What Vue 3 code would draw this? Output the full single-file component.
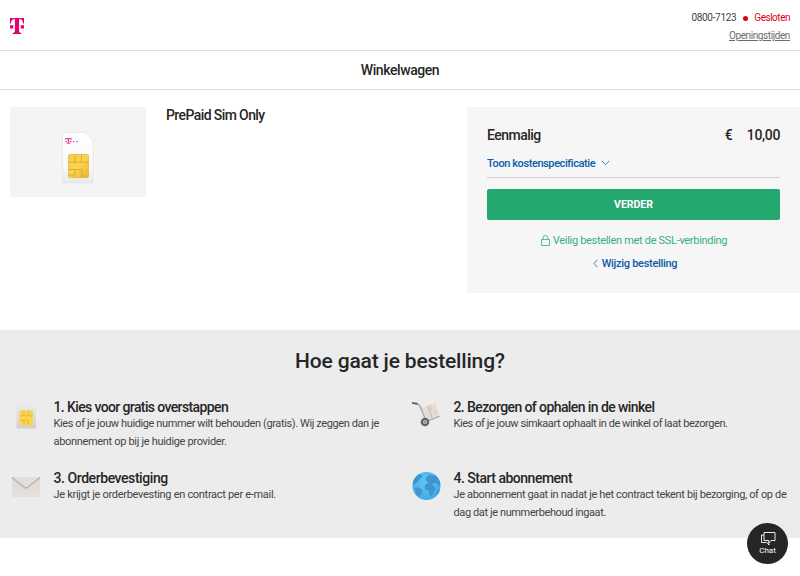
<script setup>
const steps = [
  { icon: 'sim', title: '1. Kies voor gratis overstappen', lines: ['Kies of je jouw huidige nummer wilt behouden (gratis). Wij zeggen dan je', 'abonnement op bij je huidige provider.'] },
  { icon: 'cart', title: '2. Bezorgen of ophalen in de winkel', lines: ['Kies of je jouw simkaart ophaalt in de winkel of laat bezorgen.'] },
  { icon: 'mail', title: '3. Orderbevestiging', lines: ['Je krijgt je orderbevesting en contract per e-mail.'] },
  { icon: 'globe', title: '4. Start abonnement', lines: ['Je abonnement gaat in nadat je het contract tekent bij bezorging, of op de', 'dag dat je nummerbehoud ingaat.'] },
]
</script>

<template>
  <div class="page">
    <header class="top">
      <svg class="logo" width="14" height="16" viewBox="0 0 14 16" fill="#e20074">
        <path d="M0 0h14v5.6h-.9C12.800 2.400 11.700 1 9.100 1v11.200c0 2 .5 2.600 2.200 2.700V16H2.700v-1.100c1.700-.1 2.200-.7 2.200-2.700V1C2.300 1 1.200 2.400.9 5.600H0zM0 7.300h3.300v3.200H0zM10.700 7.300H14v3.200h-3.300z" />
      </svg>
      <div class="contact">
        <div class="phone"><span class="number">0800-7123</span><i class="dot"></i><span class="closed">Gesloten</span></div>
        <a class="hours">Openingstijden</a>
      </div>
    </header>
    <h1 class="bar">Winkelwagen</h1>

    <main class="order">
      <div class="thumb">
        <svg width="34" height="54" viewBox="0 0 34 54">
          <defs>
            <linearGradient id="card" x1="0" y1="0" x2="0" y2="1"><stop offset="0" stop-color="#fff" /><stop offset=".7" stop-color="#f8f8f8" /><stop offset="1" stop-color="#e9e9e9" /></linearGradient>
            <linearGradient id="gold" x1="0" y1="0" x2="1" y2="1"><stop offset="0" stop-color="#fbcb48" /><stop offset=".5" stop-color="#f9d44f" /><stop offset="1" stop-color="#e9b52f" /></linearGradient>
          </defs>
          <path d="M2.500 1.500H24.500L32 9V52H1.500V2.500Z" fill="url(#card)" stroke="#e4e4e4" stroke-width=".7" />
          <path fill="#e83a94" d="M4.500 7h6v2.200h-.6L9.300 8H8.200v4h1v.8H5.800V12h1V8H5.700l-.6 1.200h-.6zM4.500 10h1.400v1.200H4.500zM9.100 10h1.400v1.200H9.100zM12 10h1.300v1.300H12zM15.300 10h1.300v1.300h-1.300z" />
          <rect x="7.500" y="23.500" width="20" height="23" rx="1.500" fill="url(#gold)" stroke="#d9a52d" stroke-width=".6" />
          <path d="M7.500 31.200h20M14 23.500v7.700M20.500 23.500v7.700M7.500 38.500H21V46.500M14 38.500V44M7.500 44H14" fill="none" stroke="#d6a22c" stroke-width=".8" />
        </svg>
      </div>
      <h2 class="product">PrePaid Sim Only</h2>
      <aside class="summary">
        <div class="total"><span class="once">Eenmalig</span><span class="price"><span>€</span><span class="amount">10,00</span></span></div>
        <a class="spec"><span>Toon kostenspecificatie</span>
          <svg width="9" height="6" viewBox="0 0 9 6" fill="none" stroke="#3b82c0"><path d="M.8.900 4.500 4.800 8.200.9" /></svg>
        </a>
        <button class="next">VERDER</button>
        <div class="secure">
          <svg width="9" height="11" viewBox="0 0 9 11" fill="none" stroke="#3fb27f" stroke-width=".85"><path d="M.5 4.500h8v6h-8zM2 4.500V3a2.500 2.500 0 0 1 5 0v1.500" /></svg>
          <span>Veilig bestellen met de SSL-verbinding</span>
        </div>
        <a class="change">
          <svg width="5" height="9" viewBox="0 0 5 9" fill="none" stroke="#3b82c0"><path d="M4.400.8 1 4.500l3.400 3.700" /></svg>
          <span>Wijzig bestelling</span>
        </a>
      </aside>
    </main>

    <section class="how">
      <h2 class="howtitle">Hoe gaat je bestelling?</h2>
      <div class="steps">
        <article v-for="s in steps" :key="s.icon" class="step" :class="s.icon">
          <div class="pic">
            <svg v-if="s.icon === 'sim'" width="30" height="30" viewBox="0 0 30 30">
              <defs><linearGradient id="sc" x1="0" y1="0" x2="0" y2="1"><stop offset="0" stop-color="#ededed" /><stop offset=".5" stop-color="#e0e0e0" /><stop offset="1" stop-color="#cfcfcf" /></linearGradient></defs>
              <path d="M5.500 2H21l4 4V28.500H5.500z" fill="url(#sc)" />
              <rect x="8.500" y="10.500" width="13.500" height="15" rx="1" fill="#fbd54b" />
              <path d="M8.500 15.800H22M12.900 10.500v5.300M17.700 10.500v5.300M8.500 20.200h8.800v4.300M13 20.200v4.300" fill="none" stroke="#e4b238" stroke-width=".8" />
            </svg>
            <svg v-else-if="s.icon === 'cart'" width="30" height="30" viewBox="0 0 30 30">
              <path d="M10.500 8 24.500 2.800 28.500 14.500 16 20z" fill="#e6dcd8" />
              <path d="m16 6.200 1.600-.6 4.300 11.800-1.600.7z" fill="#cdc2be" />
              <path d="m17.600 5.600 1.900-.7 2 5.300-1.900.7z" fill="#d8cdc9" />
              <path d="m23.300 11.700 1.600-.6.700 1.800-1.600.6z" fill="#c9bfbc" />
              <path d="M5.500 3.500c2.700.5 3.400 2.100 4.300 4.400l4.900 12.200M15 21.600l13.500-5.400" fill="none" stroke="#aaa8aa" stroke-width="1.400" />
              <path d="m1.800 2.900 4 .9" stroke="#69676a" stroke-width="2" stroke-linecap="round" />
              <circle cx="14" cy="22" r="3.200" fill="#c2c0c1" stroke="#656366" stroke-width="2.200" />
              <circle cx="14" cy="22" r="1.200" fill="#9a989a" />
            </svg>
            <svg v-else-if="s.icon === 'mail'" width="30" height="30" viewBox="0 0 30 30">
              <defs><linearGradient id="em" x1="0" y1="0" x2="0" y2="1"><stop offset="0" stop-color="#ded8d5" /><stop offset="1" stop-color="#e6e0dd" /></linearGradient></defs>
              <path d="M1 6h28v20H1z" fill="url(#em)" />
              <path d="M1 6h28L15 17z" fill="#e3dddb" />
              <path d="M1 6.500 13.500 16.500q1.500 1 3 0L29 6.500" fill="none" stroke="#b7b0ae" stroke-width="1.300" />
            </svg>
            <svg v-else width="30" height="30" viewBox="0 0 30 30">
              <defs>
                <radialGradient id="sea" cx=".45" cy=".35" r=".7"><stop offset="0" stop-color="#62c3f4" /><stop offset="1" stop-color="#3eaae6" /></radialGradient>
                <clipPath id="disc"><circle cx="15.500" cy="15" r="14" /></clipPath>
              </defs>
              <circle cx="15.500" cy="15" r="14" fill="url(#sea)" />
              <g clip-path="url(#disc)" fill="#3f95cd">
                <path d="M5 4.500 9 3 11.500 5.500 9.500 7.500 7.500 9.500 5.500 12 3 13.500 0 11z" />
                <path d="M3.500 17 8 16.500 11.500 19.500 11 22.500 8 25.500 5.500 24z" />
                <path d="M16 5.500 19 3.500 22 5 25 4.500 28.500 9 30 13.500 27.500 15.500 26 12.500 23 12 21 13.500 23 15 24.500 18 22.500 21.500 20.500 25.500 18.500 24 18 20 14.500 18.500 13.500 15.500 15.500 13 18 11.500 16 10.500 14.500 8.500z" />
                <path d="m26 20 3-2-1 5-3 1z" />
              </g>
            </svg>
          </div>
          <div class="copy">
            <h3>{{ s.title }}</h3>
            <p v-for="l in s.lines" :key="l">{{ l }}</p>
          </div>
        </article>
      </div>
    </section>

    <button class="chat">
      <svg width="16" height="15" viewBox="0 0 16 15" fill="none" stroke="#fff" stroke-width=".9"><path d="M4 1.500h11v8h-4L8.700 12.300V9.500H4zM4 4H1.500v7.500H6.800L9 14v-1.500" /></svg>
      <span>Chat</span>
    </button>
  </div>
</template>

<style>
body { margin: 0; background: #fff; overflow: hidden; }
</style>

<style scoped>
* { box-sizing: border-box; }
.page { width: 800px; height: 576px; font-family: Roboto, "Liberation Sans", sans-serif; color: #262626; white-space: nowrap; font-size: 11px; }
h1, h2, h3, p { margin: 0; font-weight: 500; }
svg { display: block; flex: none; }
button { border: 0; padding: 0; font-family: inherit; }
.top { height: 51px; border-bottom: 1px solid #dedede; padding: 9px 10px 0; display: flex; justify-content: space-between; }
.logo { margin-top: 9px; }
.contact { display: flex; flex-direction: column; align-items: flex-end; line-height: 18px; font-size: 10px; color: #444; }
.phone { display: flex; align-items: center; }
.number { letter-spacing: -0.32px; }
.dot { width: 5px; height: 5px; border-radius: 50%; background: #e00000; margin: 0 6px 0 7px; }
.closed { color: #e2001a; letter-spacing: -0.48px; }
.hours { color: #6b6b6b; text-decoration: underline; text-underline-offset: 1px; letter-spacing: -0.4px; }
.bar { height: 39px; border-bottom: 1px solid #dedede; text-align: center; font-size: 14px; line-height: 39px; letter-spacing: -0.42px; }
.order { display: flex; padding: 17px 0 0 10px; height: 240px; align-items: flex-start; }
.thumb { width: 136px; height: 90px; background: #f4f4f4; display: flex; padding: 24px 0 0 51px; }
.product { margin-left: 20px; width: 301px; font-size: 14px; line-height: 16px; letter-spacing: -0.6px; }
.summary { width: 333px; height: 186px; background: #f6f6f6; padding: 18px 20px 0; display: flex; flex-direction: column; }
.total { display: flex; justify-content: space-between; font-size: 14px; line-height: 20px; font-weight: 500; }
.once { letter-spacing: -0.52px; }
.price { display: flex; gap: 14px; }
.amount { letter-spacing: -0.35px; }
.spec { height: 33px; border-bottom: 1px solid #d0d0d0; display: flex; align-items: center; gap: 6px; color: #0a5ca8; font-weight: 500; padding-top: 4px; letter-spacing: -0.41px; }
.next { margin-top: 11px; height: 31px; flex: none; background: #24a870; color: #fff; border-radius: 2px; font-size: 10.500px; font-weight: 700; }
.secure { margin-top: 12px; height: 16px; display: flex; align-items: center; justify-content: center; gap: 3px; color: #35b17b; letter-spacing: -0.31px; padding-left: 1px; }
.change { margin-top: 7px; height: 16px; display: flex; align-items: center; justify-content: center; gap: 4px; color: #0a5ca8; font-weight: 500; letter-spacing: -0.3px; padding-left: 3px; }
.how { height: 208px; background: #ececec; padding-top: 18px; }
.howtitle { text-align: center; font-size: 21px; line-height: 26px; letter-spacing: -0.17px; }
.steps { display: grid; grid-template-columns: 400px 400px; grid-template-rows: 71px 71px; padding-top: 24px; }
.step { display: flex; padding-left: 11px; }
.pic { width: 42.500px; padding-top: 2px; flex: none; }
h3 { font-size: 14px; line-height: 18px; }
p { font-weight: 400; font-size: 11px; line-height: 18px; color: #444; }
h3 + p { margin-top: -1px; }
.sim h3 { letter-spacing: -0.62px; }
.cart h3 { letter-spacing: -0.59px; }
.mail h3 { letter-spacing: -0.43px; }
.globe h3 { letter-spacing: -0.5px; }
.sim p { letter-spacing: -0.39px; }
.sim p + p { letter-spacing: -0.32px; }
.cart p { letter-spacing: -0.43px; }
.mail p { letter-spacing: -0.3px; }
.globe p { letter-spacing: -0.35px; }
.globe p + p { letter-spacing: -0.39px; }
.chat { position: absolute; left: 747px; top: 523px; width: 41px; height: 41px; border-radius: 50%; background: #262626; color: #fff; display: flex; flex-direction: column; align-items: center; padding-top: 8px; font-size: 8px; line-height: 10px; }
</style>
